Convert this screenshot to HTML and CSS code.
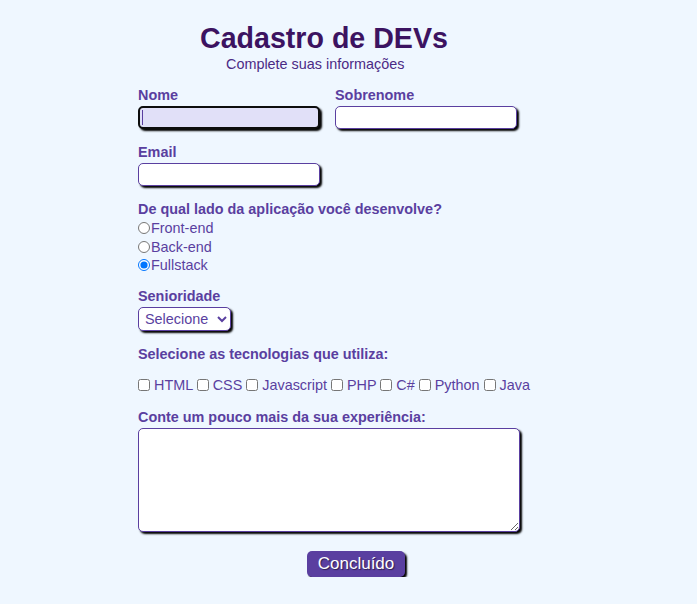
FILE: index.html
```html
<!DOCTYPE html>
<html lang="pt-BR">
<head>
<meta charset="utf-8">
<title>Cadastro de DEVs</title>
<link rel="stylesheet" href="styles.css">
</head>
<body>
<main class="page">
  <header class="header">
    <h1 class="title">Cadastro de DEVs</h1>
    <p class="subtitle">Complete suas informações</p>
  </header>
  <form class="form">
    <div class="row">
      <div class="field">
        <label class="label" for="nome">Nome</label>
        <div class="caret-wrap">
          <input class="text-input is-focused" id="nome" type="text">
          <span class="caret"></span>
        </div>
      </div>
      <div class="field">
        <label class="label" for="sobrenome">Sobrenome</label>
        <input class="text-input" id="sobrenome" type="text">
      </div>
    </div>
    <div class="field">
      <label class="label" for="email">Email</label>
      <input class="text-input" id="email" type="email">
    </div>
    <div class="field">
      <span class="label">De qual lado da aplicação você desenvolve?</span>
      <div class="radios">
        <label class="radio-line"><input class="radio" type="radio" name="lado">Front-end</label>
        <label class="radio-line"><input class="radio" type="radio" name="lado">Back-end</label>
        <label class="radio-line"><input class="radio" type="radio" name="lado" checked>Fullstack</label>
      </div>
    </div>
    <div class="field field-sen">
      <label class="label" for="sen">Senioridade</label>
      <div><select class="select" id="sen"><option>Selecione</option></select></div>
    </div>
    <div class="field">
      <span class="label">Selecione as tecnologias que utiliza:</span>
      <div class="checks">
        <label><input class="check" type="checkbox"> HTML</label>
        <label><input class="check" type="checkbox"> CSS</label>
        <label><input class="check" type="checkbox"> Javascript</label>
        <label><input class="check" type="checkbox"> PHP</label>
        <label><input class="check" type="checkbox"> C#</label>
        <label><input class="check" type="checkbox"> Python</label>
        <label><input class="check" type="checkbox"> Java</label>
      </div>
    </div>
    <div class="field">
      <label class="label" for="exp">Conte um pouco mais da sua experiência:</label>
      <textarea class="textarea" id="exp"></textarea>
    </div>
    <div class="actions">
      <button class="button" type="button">Concluído</button>
    </div>
  </form>
</main>
</body>
</html>
```
FILE: styles.css
```css
html, body {
  margin: 0;
  background: #eff7ff;
}
body {
  font-family: "Liberation Sans", Arial, sans-serif;
  color: #5a3fa0;
}
.page {
  padding: 20px 0 0 138px;
}
.header {
  display: flex;
  flex-direction: column;
}
.title {
  margin: 0 0 0 62px;
  font-size: 28.6px;
  line-height: 36px;
  font-weight: bold;
  color: #3c1361;
}
.subtitle {
  margin: 0 0 0 88px;
  font-size: 14.4px;
  line-height: 16px;
  color: #4b2a85;
}
.form {
  margin-top: 15px;
  display: flex;
  flex-direction: column;
}
.row {
  display: flex;
  gap: 15px;
}
.field {
  display: flex;
  flex-direction: column;
  align-items: flex-start;
  margin-bottom: 15px;
}
.label {
  font-size: 14.4px;
  line-height: 16px;
  font-weight: bold;
  color: #5a3fa0;
  margin-bottom: 3px;
}
.caret-wrap {
  position: relative;
}
.caret {
  position: absolute;
  left: 4px;
  top: 4px;
  width: 1px;
  height: 15px;
  background: #5a3fa0;
}
.text-input {
  box-sizing: border-box;
  width: 182px;
  height: 23px;
  border: 1px solid #5a3fa0;
  border-radius: 5px;
  background: #fff;
  box-shadow: 2px 2px 2px #000;
  margin: 0;
  padding: 2px 4px;
  font-family: inherit;
  font-size: 14px;
}
.is-focused {
  background: #e1e0f8;
  border: 2px solid #0d0d0d;
  outline: none;
}
.radios {
  display: flex;
  flex-direction: column;
  margin-top: -1px;
  margin-bottom: -1px;
}
.radio-line {
  display: flex;
  align-items: center;
  height: 18.6px;
  font-size: 14.4px;
  color: #5a3fa0;
}
.radio {
  margin: 0 1px 0 0;
  width: 12px;
  height: 12px;
}
.field-sen {
  margin-top: -1px;
}
.select {
  box-sizing: border-box;
  height: 24px;
  width: 93px;
  border: 1px solid #5a3fa0;
  border-radius: 5px;
  background: #fff;
  box-shadow: 2px 2px 2px #000;
  color: #5a3fa0;
  font-family: inherit;
  font-size: 14.4px;
  padding: 0 2px;
  margin: 0;
}
.checks {
  margin-top: 12px;
  margin-bottom: 1px;
  font-size: 14.4px;
  line-height: 16px;
  color: #5a3fa0;
}
.check {
  margin: 0;
  vertical-align: -1px;
  width: 12px;
  height: 12px;
}
.textarea {
  box-sizing: border-box;
  width: 382px;
  height: 104px;
  margin: 0;
  border: 1px solid #5a3fa0;
  border-radius: 5px;
  background: #fff;
  box-shadow: 2px 2px 2px #000;
}
.actions {
  padding-left: 169px;
  margin-top: 4px;
}
.button {
  box-sizing: border-box;
  width: 98px;
  height: 26px;
  padding: 0;
  border: none;
  border-radius: 5px;
  background: #5a3fa0;
  color: #fff;
  font-family: inherit;
  font-size: 17px;
  text-shadow: 1px 1px 1px rgba(0,0,0,0.5);
  box-shadow: 2px 2px 2px #000;
}
```
